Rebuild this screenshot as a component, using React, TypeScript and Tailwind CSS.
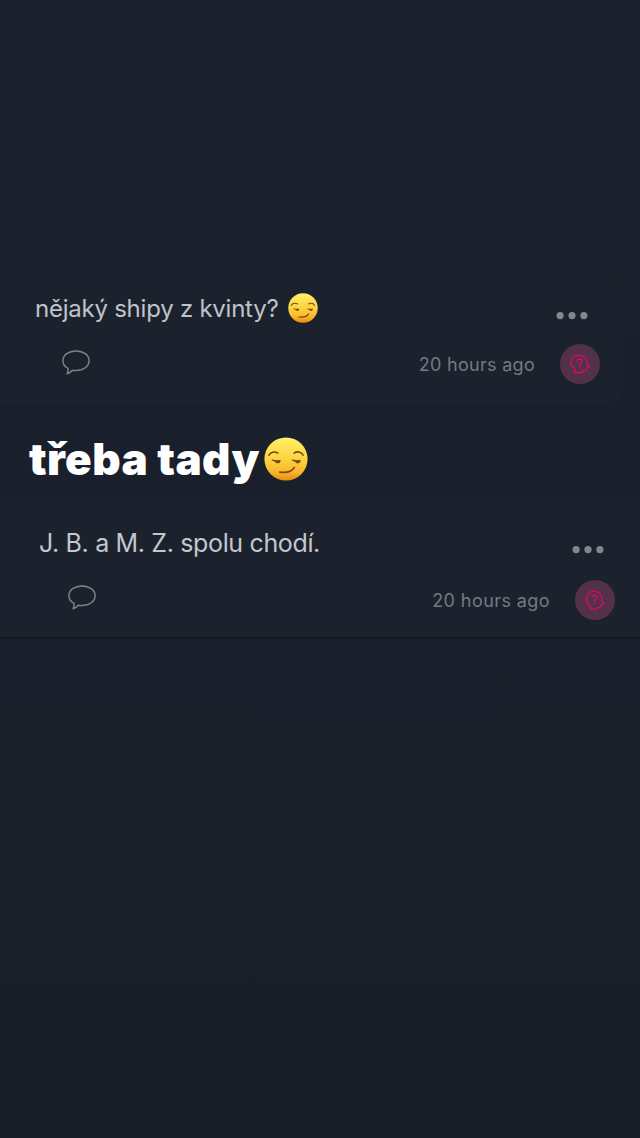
import { useId } from 'react';

function SmirkEmoji({ className }: { className: string }) {
  const id = useId();
  return (
    <svg viewBox="0 0 44 44" className={className} aria-hidden="true">
      <defs>
        <linearGradient id={id} x1="0" y1="0" x2="0" y2="1">
          <stop offset="0" stopColor="#fff06a" />
          <stop offset="0.5" stopColor="#fdd33f" />
          <stop offset="0.8" stopColor="#f9b62a" />
          <stop offset="1" stopColor="#e98a16" />
        </linearGradient>
      </defs>
      <circle cx="22" cy="22" r="21.6" fill={`url(#${id})`} />
      <g fill="none" stroke="#75490e" strokeLinecap="round">
        <path d="M4.8 18.3c1.8-3.4 5.6-4.3 9.2-2.1" strokeWidth="1.5" />
        <path d="M30 16.2c3.6-2.4 7.2-1.4 9.2 2" strokeWidth="1.5" />
        <path d="M15.8 35.2c5.8.6 12-.2 14.4-4.6" strokeWidth="1.7" />
      </g>
      <g fill="#75490e">
        <path d="M8.2 22.600c2.800.7 5.200.8 7.800.5.7 0 .8.700.4 1.100-.2 1.300-1.200 2.100-2.500 2.100-1.400 0-2.300-.6-2.600-1.600-1.300-.2-2.300-.6-3.300-1.300-.5-.3-.4-.9.2-.8z" />
        <path d="M28.200 22.600c2.800.7 5.200.8 7.800.5.7 0 .8.700.4 1.100-.2 1.300-1.200 2.100-2.500 2.100-1.400 0-2.300-.6-2.600-1.600-1.300-.2-2.300-.6-3.300-1.300-.5-.3-.4-.9.2-.8z" />
      </g>
    </svg>
  );
}

function BubbleIcon() {
  return (
    <svg viewBox="0 0 28 25" className="h-[25px] w-7" fill="none" stroke="#7c818a" strokeWidth="1.5" strokeLinejoin="round" aria-hidden="true">
      <path d="M14 .9C6.700.9.9 5.100.9 10.700c0 3.500 2.100 6.100 5.300 7.700.1 2-.3 3.600-1.100 5.300 2.100-.5 3.900-1.600 5.200-3.400 1.200.2 2.400.3 3.700.3 7.300 0 13.100-4.300 13.100-9.900S21.300.9 14 .9z" />
    </svg>
  );
}

function Avatar({ variant }: { variant: 'open' | 'closed' }) {
  return (
    <div className="flex size-10 shrink-0 items-center justify-center rounded-full bg-[#533148]">
      <svg viewBox="0 0 20 20" className="size-5" fill="none" stroke="#d10b6b" strokeWidth="1.4" strokeLinecap="round" strokeLinejoin="round" aria-hidden="true">
        {variant === 'open' ? (
          <path d="M4.600 18.500V14.200C2.300 13 1 11 1 8.500c0-4.300 3.600-7.200 8.100-7.200s7.800 2.900 8 7.200l1.800 3.900c.2.600-.1 1-.7 1h-1.500v1.500c0 1-.6 1.500-1.600 1.500H12.800v2.100z" />
        ) : (
          <path d="M5.500 18.300l-.3-2.500C3 14.900 2 12.700 2 10.700L1.300 8l1.200-1.700C2.900 3.500 5.300 1.500 8.400 1.200c4.400-.4 8 2.600 8.400 6.800l-.1 2.500 2.300 3.300-2.700.8c-.4 2.200-1.800 3.300-4 3.300l-1.500 1.300c-1.600.4-3.500-.1-5.300-.9z" />
        )}
        <path d="M7.100 7.200C7.300 5.700 8.300 5 9.600 5c1.500 0 2.500.9 2.500 2.200 0 1.900-2.500 2-2.500 3.900" />
        <path d="M9.500 13.600v.1" strokeWidth="1.700" />
      </svg>
    </div>
  );
}

function DotsIcon() {
  return (
    <svg viewBox="0 0 32 8" className="h-2 w-8" fill="#83868e" aria-hidden="true">
      <circle cx="4.1" cy="3.600" r="3.600" />
      <circle cx="16" cy="3.600" r="3.600" />
      <circle cx="27.900" cy="3.600" r="3.600" />
    </svg>
  );
}

export default function App() {
  return (
    <main className="flex h-[1138px] w-[640px] flex-col overflow-hidden bg-linear-to-b from-[#1b212c] via-[#1a202b] to-[#181e28] pt-[264px] font-['Inter',sans-serif]">
      <article className="h-[139px] w-[622px] shrink-0 rounded-r-xl bg-[#1b222d] pt-[29px] pr-[22px] pl-[35px]">
        <div className="flex h-8 items-center justify-between pr-3">
          <p className="flex items-center whitespace-nowrap text-2xl/8 tracking-[-0.24px] text-[#c0c3ca]">
            nějaký shipy z kvinty?
            <SmirkEmoji className="mb-0.5 ml-2.5 size-[30px]" />
          </p>
          <div className="pt-[13px]">
            <DotsIcon />
          </div>
        </div>
        <div className="mt-[19px] flex h-10 items-center pl-[27px]">
          <div className="pb-1">
            <BubbleIcon />
          </div>
          <time className="mr-[25px] ml-auto text-[18px] tracking-[0.3px] text-[#747983]">20 hours ago</time>
          <Avatar variant="open" />
        </div>
      </article>

      <h1 className="flex h-[95px] shrink-0 items-center whitespace-nowrap pt-[17px] pl-[29px] text-[44px]/[76px] font-black tracking-[0.4px] text-white">
        třeba tady
        <SmirkEmoji className="ml-1 size-11" />
      </h1>

      <article className="h-[141px] w-full shrink-0 border-b-2 border-[#11161f] bg-[#1b222d] pt-[29px] pr-[25px] pl-[39px]">
        <div className="flex h-8 items-center justify-between pr-[11px]">
          <p className="whitespace-nowrap text-[25px]/8 tracking-[-0.35px] text-[#c4c7cd]">J. B. a M. Z. spolu chodí.</p>
          <div className="pt-[13px]">
            <DotsIcon />
          </div>
        </div>
        <div className="mt-[21px] flex h-10 items-center pl-[29px]">
          <div className="pb-1.5">
            <BubbleIcon />
          </div>
          <time className="mr-[25px] ml-auto text-[18px] tracking-[0.42px] text-[#747983]">20 hours ago</time>
          <Avatar variant="closed" />
        </div>
      </article>
    </main>
  );
}
